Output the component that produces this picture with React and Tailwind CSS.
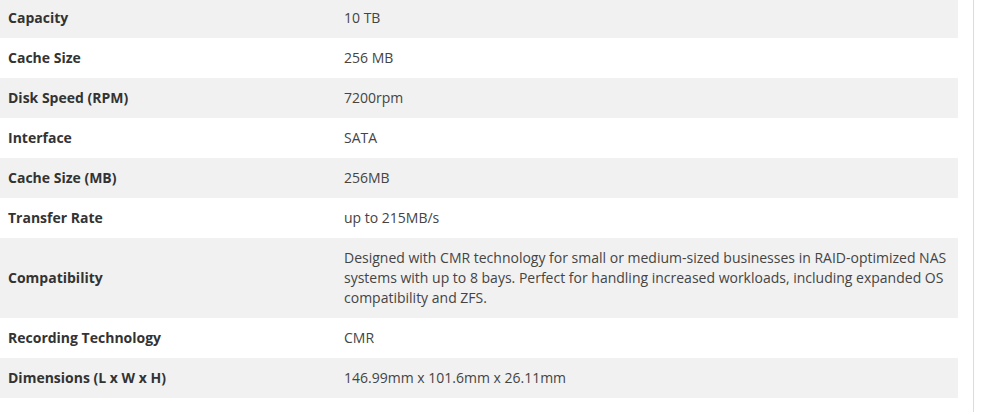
const specs = [
  ["Capacity", "10 TB"],
  ["Cache Size", "256 MB"],
  ["Disk Speed (RPM)", "7200rpm"],
  ["Interface", "SATA"],
  ["Cache Size (MB)", "256MB"],
  ["Transfer Rate", "up to 215MB/s"],
  [
    "Compatibility",
    "Designed with CMR technology for small or medium-sized businesses in RAID-optimized NAS systems with up to 8 bays. Perfect for handling increased workloads, including expanded OS compatibility and ZFS.",
  ],
  ["Recording Technology", "CMR"],
  ["Dimensions (L x W x H)", "146.99mm x 101.6mm x 26.11mm"],
];

export default function App() {
  return (
    <div className="h-[415px] overflow-hidden bg-white font-['Open_Sans',sans-serif] text-[14px] leading-[20px]">
      <div className="w-[974px] h-[414px] border-r border-[#dcdcdc]">
        <table className="w-[958px] -mt-[2px] border-collapse">
          <tbody>
            {specs.map(([label, value], i) => (
              <tr key={label} className={i % 2 === 0 ? "bg-[#f1f1f1]" : "bg-white"}>
                <td className="w-[336px] pl-[8px] py-[10px] align-middle font-bold text-[#333]">
                  {label}
                </td>
                <td className="pl-[8px] pr-[8px] py-[10px] align-middle text-[#444]">{value}</td>
              </tr>
            ))}
          </tbody>
        </table>
      </div>
    </div>
  );
}
